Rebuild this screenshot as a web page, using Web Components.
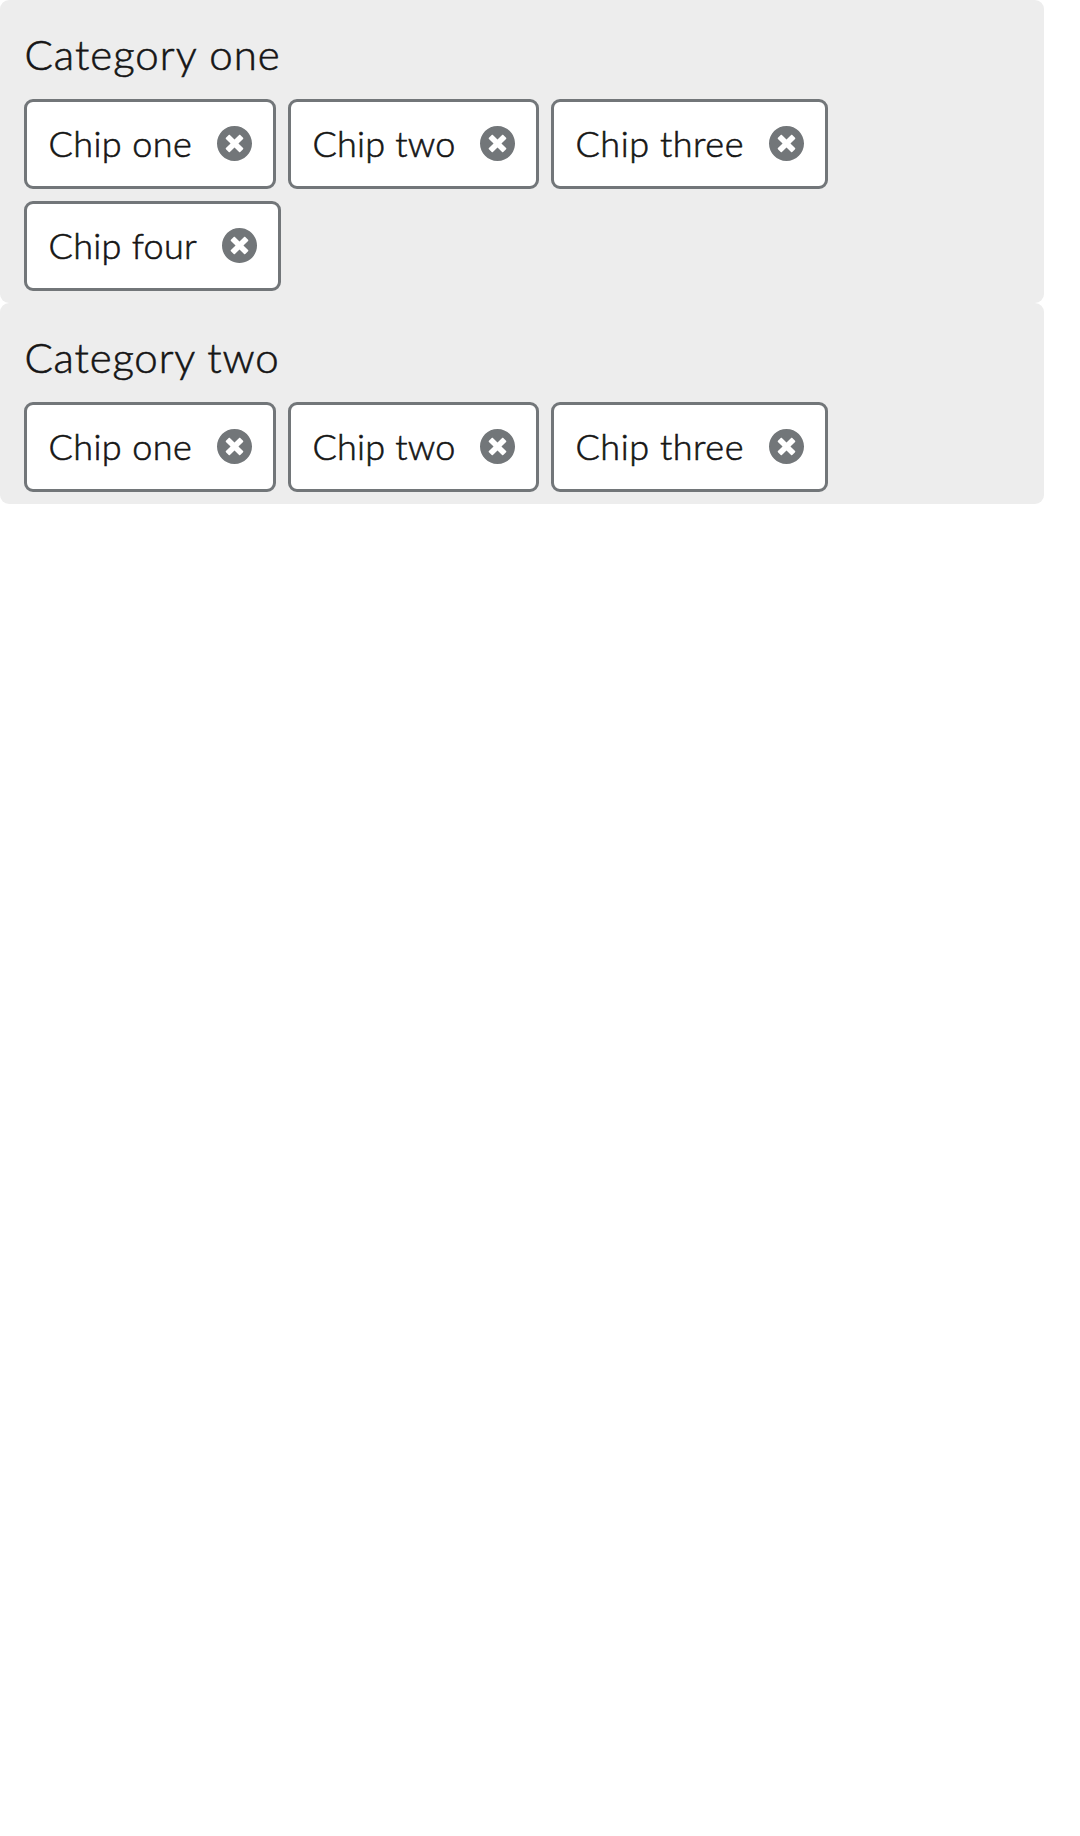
<!DOCTYPE html>
<html lang="en">
<head>
<meta charset="utf-8">
<title>Chip groups</title>
<style>
body{margin:0;background:#fff;color:#151515;font-family:Lato,"Open Sans",sans-serif;font-weight:300;-webkit-text-stroke:.6px #151515}
main{width:1044px}
</style>
</head>
<body>
<main>
<chip-group label="Category one" style="--hs:1.02px">
<chip-item style="--w:252px;--ls:.4px">Chip one</chip-item>
<chip-item style="--w:251px;--ls:.2px">Chip two</chip-item>
<chip-item style="--w:277px;--ls:.53px">Chip three</chip-item>
<chip-item style="--w:257px;--ls:.3px">Chip four</chip-item>
</chip-group>
<chip-group label="Category two" style="--hs:.82px">
<chip-item style="--w:252px;--ls:.4px">Chip one</chip-item>
<chip-item style="--w:251px;--ls:.2px">Chip two</chip-item>
<chip-item style="--w:277px;--ls:.53px">Chip three</chip-item>
</chip-group>
</main>
<script>
class ChipItem extends HTMLElement{
constructor(){
super();
this.attachShadow({mode:'open'}).innerHTML=`<style>
:host{display:flex;align-items:center;justify-content:space-between;box-sizing:border-box;width:var(--w);height:90px;padding:0 21px 0 21.5px;background:#fff;border:3px solid #727679;border-radius:9px;font-size:36px;line-height:54px;letter-spacing:var(--ls);white-space:nowrap}
span{margin-bottom:2px}
button{all:unset;display:flex;width:35px;height:35px;color:#727679;margin-bottom:1px}
svg{width:35px;height:35px}
</style><span><slot></slot></span><button aria-label="Remove"><svg viewBox="8 8 496 496" fill="currentColor"><path d="M256 8C119 8 8 119 8 256s111 248 248 248 248-111 248-248S393 8 256 8zm121.600 313.100c4.700 4.700 4.700 12.300 0 17L338 377.600c-4.700 4.700-12.300 4.700-17 0L256 312l-65.100 65.600c-4.700 4.700-12.300 4.700-17 0L134.400 338c-4.700-4.700-4.700-12.300 0-17l65.600-65-65.600-65.100c-4.700-4.700-4.700-12.300 0-17l39.600-39.600c4.700-4.700 12.300-4.700 17 0l65 65.700 65.100-65.600c4.700-4.700 12.300-4.700 17 0l39.600 39.600c4.700 4.700 4.700 12.300 0 17L312 256l65.600 65.100z"/></svg></button>`;
}
}
class ChipGroup extends HTMLElement{
constructor(){
super();
this.attachShadow({mode:'open'}).innerHTML=`<style>
:host{display:block;padding:23px 24px 12px;background:#ededed;border-radius:9px}
h2{margin:0 0 13px;padding-left:.4px;font-size:42px;font-weight:inherit;line-height:63px;letter-spacing:var(--hs)}
div{display:flex;flex-wrap:wrap;gap:12px;width:820px}
</style><h2></h2><div><slot></slot></div>`;
this.shadowRoot.querySelector('h2').textContent=this.getAttribute('label');
}
}
customElements.define('chip-item',ChipItem);
customElements.define('chip-group',ChipGroup);
</script>
</body>
</html>
